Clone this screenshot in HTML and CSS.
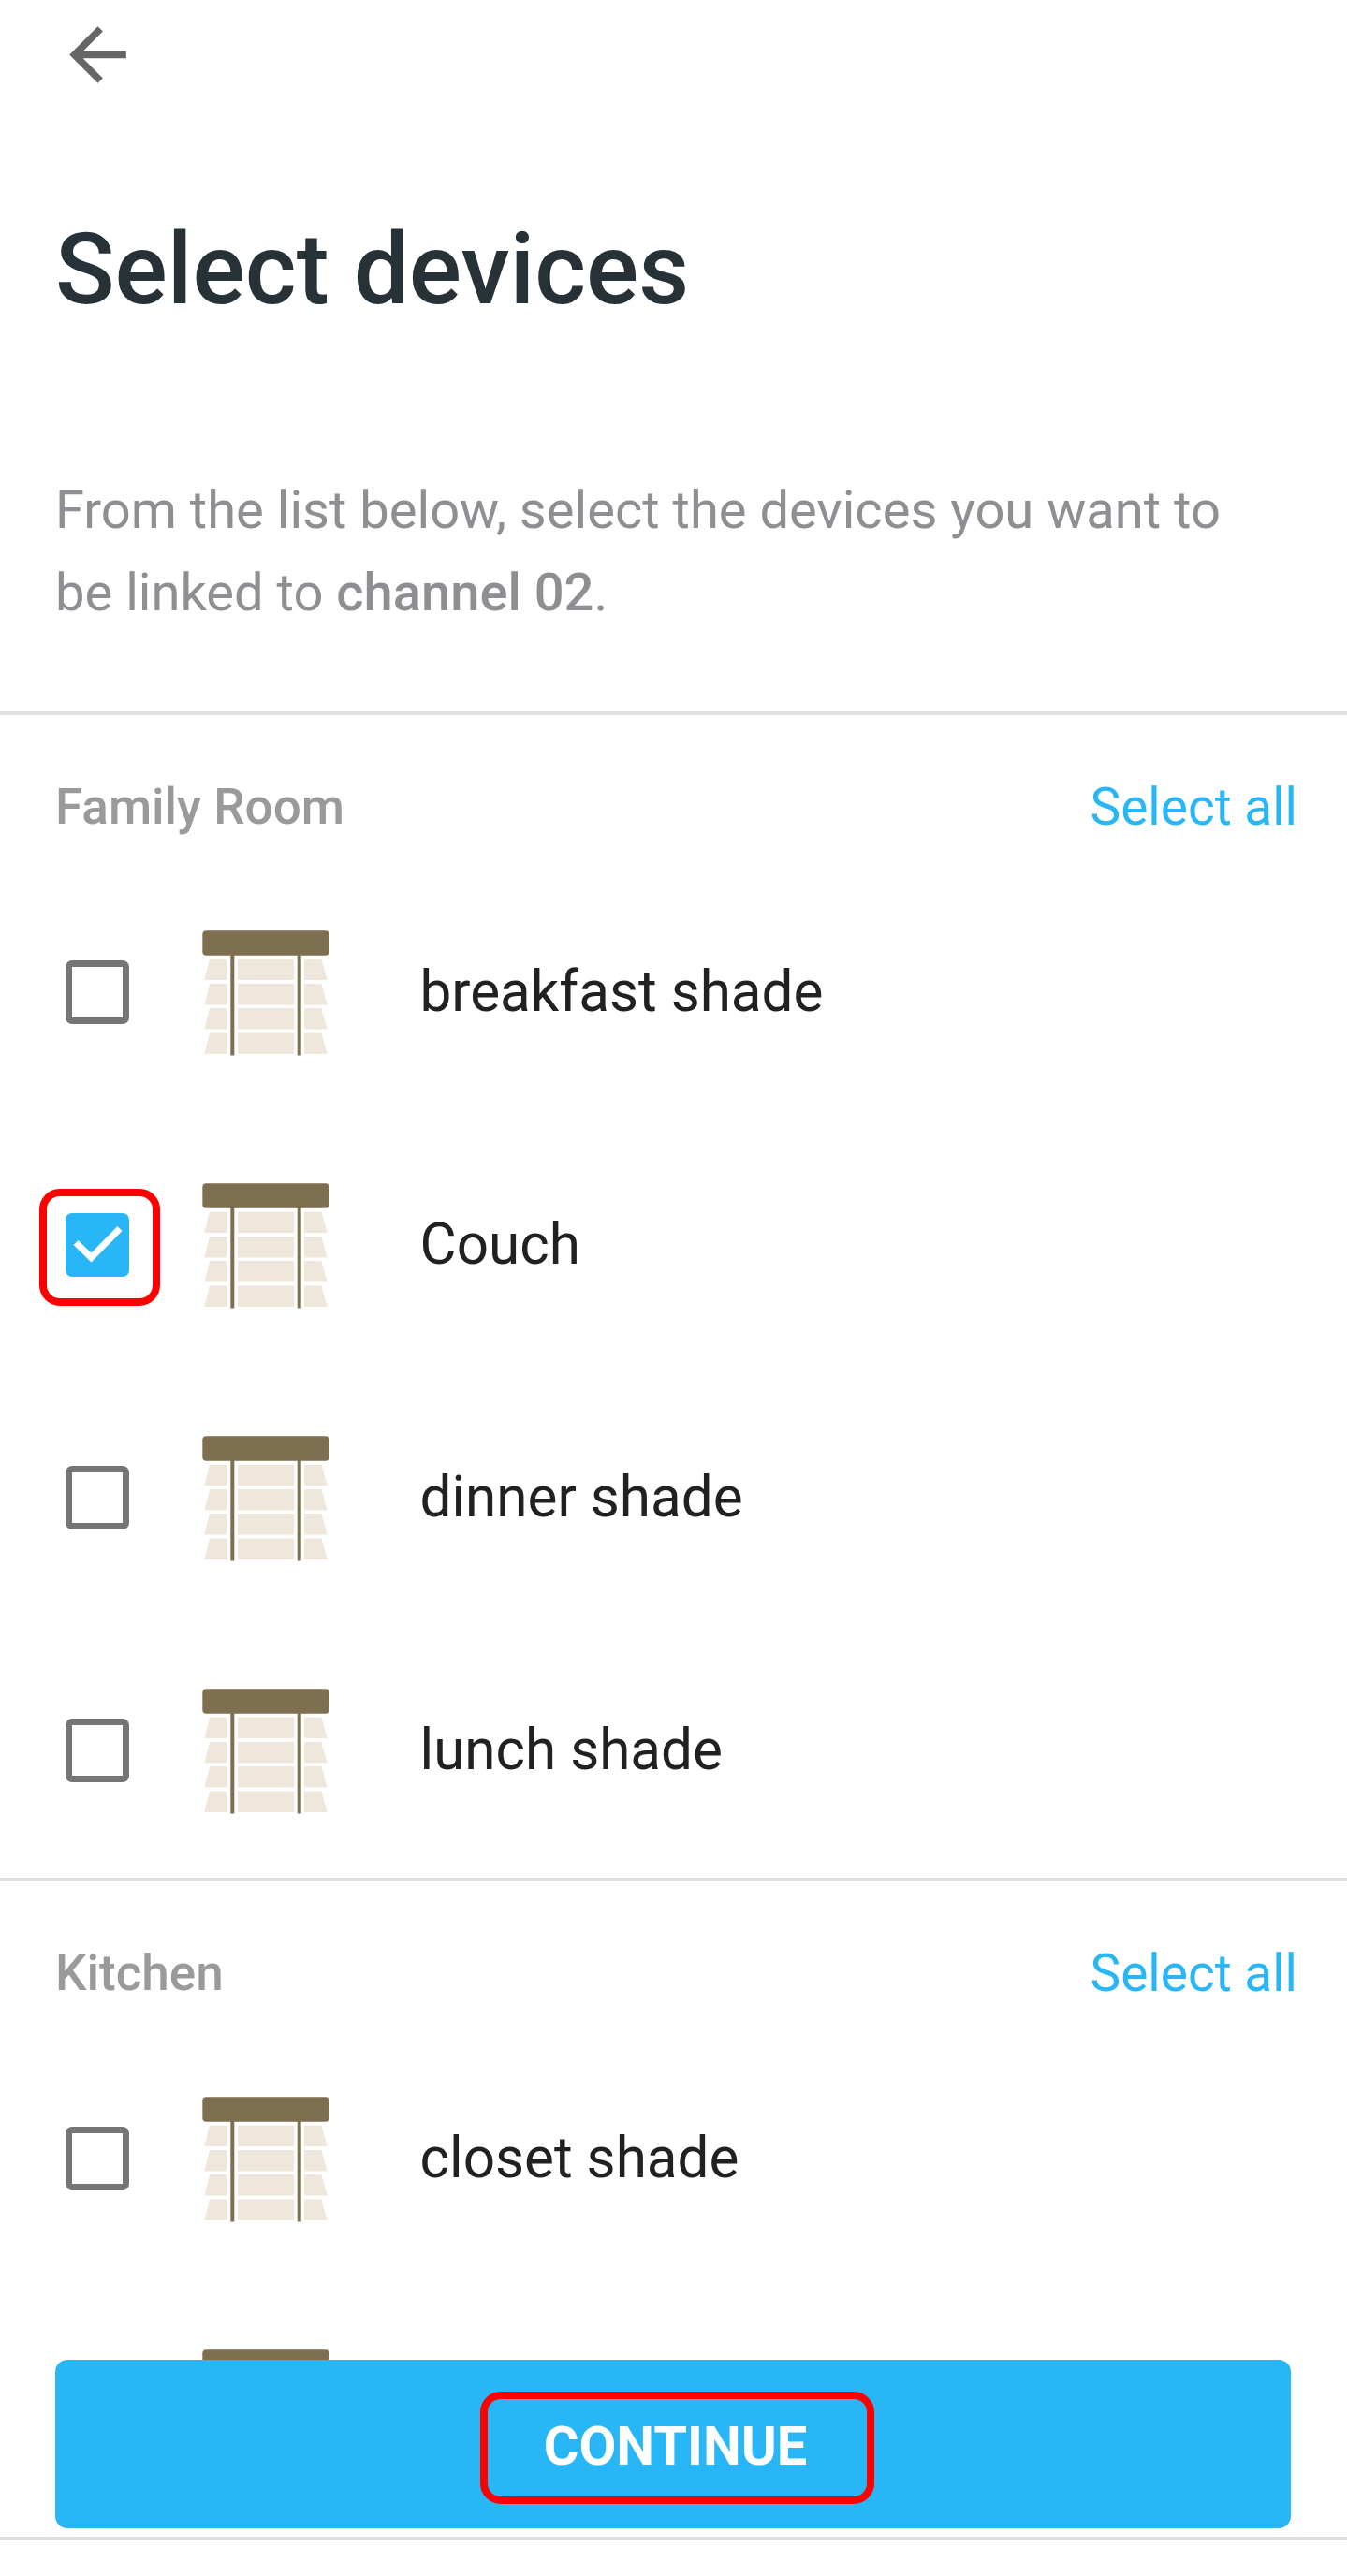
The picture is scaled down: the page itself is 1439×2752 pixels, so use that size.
FILE: index.html
```html
<!DOCTYPE html>
<html lang="en">
<head>
<meta charset="utf-8">
<title>Select devices</title>
<link rel="stylesheet" href="styles.css">
</head>
<body>
<svg class="sprites" width="0" height="0" aria-hidden="true">
  <symbol id="shade" viewBox="0 0 136 134">
    <g class="slats">
      <path d="M8 30.500h18.700v22.500H2.300z"/><rect x="38" y="30.500" width="60.300" height="22.500"/><path d="M109 30.500h18.300l6.400 22.500H109z"/>
      <path d="M8 57h18.700v22.500H2.300z"/><rect x="38" y="57" width="60.300" height="22.500"/><path d="M109 57h18.300l6.400 22.500H109z"/>
      <path d="M8 83h18.700v22.500H2.300z"/><rect x="38" y="83" width="60.300" height="22.500"/><path d="M109 83h18.300l6.400 22.500H109z"/>
      <path d="M8 109.500h18.700v22.500H2.300z"/><rect x="38" y="109.500" width="60.300" height="22.500"/><path d="M109 109.500h18.300l6.400 22.500H109z"/>
    </g>
    <g class="frame">
      <rect x="0.300" y="0.300" width="135.400" height="26.400" rx="4"/>
      <rect x="30.300" y="26" width="4" height="107.500"/>
      <rect x="101.700" y="26" width="4" height="107.500"/>
    </g>
  </symbol>
</svg>
<main class="page">
  <header class="intro">
    <button class="back" type="button" aria-label="Back">
      <svg viewBox="0 0 24 24" width="91" height="91"><path d="M20 11H7.830l5.590-5.590L12 4l-8 8 8 8 1.410-1.410L7.830 13H20v-2z"/></svg>
    </button>
    <h1 class="title">Select devices</h1>
    <p class="lead">From the list below, select the devices you want to be linked to <strong>channel 02</strong>.</p>
  </header>

  <section class="group">
    <div class="group-head"><span class="group-name">Family Room</span><a class="select-all">Select all</a></div>
    <div class="row"><span class="check"></span><svg class="shade"><use href="#shade"/></svg><span class="device">breakfast shade</span></div>
    <div class="row">
      <span class="check is-on">
        <svg viewBox="0 0 68 68"><path d="M11 31.500l16.500 16L58 16.500"/></svg>
        <span class="mark mark-check"></span>
      </span>
      <svg class="shade"><use href="#shade"/></svg><span class="device">Couch</span>
    </div>
    <div class="row"><span class="check"></span><svg class="shade"><use href="#shade"/></svg><span class="device">dinner shade</span></div>
    <div class="row"><span class="check"></span><svg class="shade"><use href="#shade"/></svg><span class="device">lunch shade</span></div>
  </section>

  <section class="group">
    <div class="group-head"><span class="group-name">Kitchen</span><a class="select-all">Select all</a></div>
    <div class="row"><span class="check"></span><svg class="shade"><use href="#shade"/></svg><span class="device">closet shade</span></div>
    <div class="row"><span class="check"></span><svg class="shade"><use href="#shade"/></svg><span class="device">pantry shade</span></div>
  </section>

  <footer class="footer">
    <button class="continue" type="button"><span class="continue-label">CONTINUE<span class="mark mark-continue"></span></span></button>
  </footer>
</main>
</body>
</html>
```

FILE: styles.css
```css
* { box-sizing: border-box; }
html, body { margin: 0; padding: 0; background: #fff; }
body { font-family: Roboto, "Noto Sans", sans-serif; }
.sprites { position: absolute; }
.slats { fill: #efe7db; }
.frame { fill: #7f6f51; }

.page {
  position: relative;
  width: 1439px;
  height: 2752px;
  overflow: hidden;
  background: #fff;
}

.intro { height: 764px; border-bottom: 4px solid #e0e0e0; padding: 13px 62px 0 0; }
.back {
  display: block;
  width: 91px;
  height: 91px;
  margin-left: 59px;
  padding: 0;
  border: 0;
  background: none;
}
.back svg { display: block; fill: #666; }
.title {
  margin: 124px 0 0 59px;
  font-size: 105px;
  line-height: 122px;
  font-weight: 500;
  color: #263238;
}
.lead {
  margin: 151px 0 0 59px;
  font-size: 56.100px;
  line-height: 88px;
  color: #8e8e93;
}
.lead strong { font-weight: 500; }

.group { border-bottom: 4px solid #e0e0e0; }
.group-head {
  display: flex;
  justify-content: space-between;
  align-items: center;
  height: 162px;
  padding: 33px 53px 0 59px;
}
.group-name { font-size: 53px; font-weight: 500; color: #9a9a9a; }
.select-all { font-size: 55px; color: #29b6f6; }

.row {
  display: flex;
  align-items: center;
  height: 270px;
  padding-left: 70px;
}
.check {
  position: relative;
  flex: none;
  width: 68px;
  height: 68px;
  margin-top: -3px;
  border: 7px solid #757575;
  border-radius: 7px;
}
.check.is-on { border: 0; background: #29b6f6; }
.check svg { display: block; fill: none; stroke: #fff; stroke-width: 7; }
.shade { flex: none; width: 136px; height: 134px; margin-left: 78px; }
.device { margin: -4px 0 0 96.500px; font-size: 60.200px; color: #212121; }

.mark { position: absolute; border: 8px solid #f00; border-radius: 22px; }
.mark-check { left: -28px; right: -33px; top: -26px; bottom: -31px; }
.mark-continue { left: -68px; right: -72px; top: -24px; bottom: -28px; }

.footer {
  position: absolute;
  left: 0;
  right: 0;
  top: 2521px;
  height: 231px;
}
.footer::after {
  content: "";
  display: block;
  height: 42px;
  margin-top: 9px;
  border-top: 4px solid #e0e0e0;
  background: #fff;
}
.continue {
  display: flex;
  justify-content: center;
  align-items: center;
  width: 1320px;
  height: 180px;
  margin-left: 59px;
  padding: 3px 0 0 5px;
  border: 0;
  border-radius: 13px;
  background: #29b6f6;
  font-family: inherit;
}
.continue-label {
  position: relative;
  font-size: 57.800px;
  font-weight: 700;
  color: #fff;
}
```
